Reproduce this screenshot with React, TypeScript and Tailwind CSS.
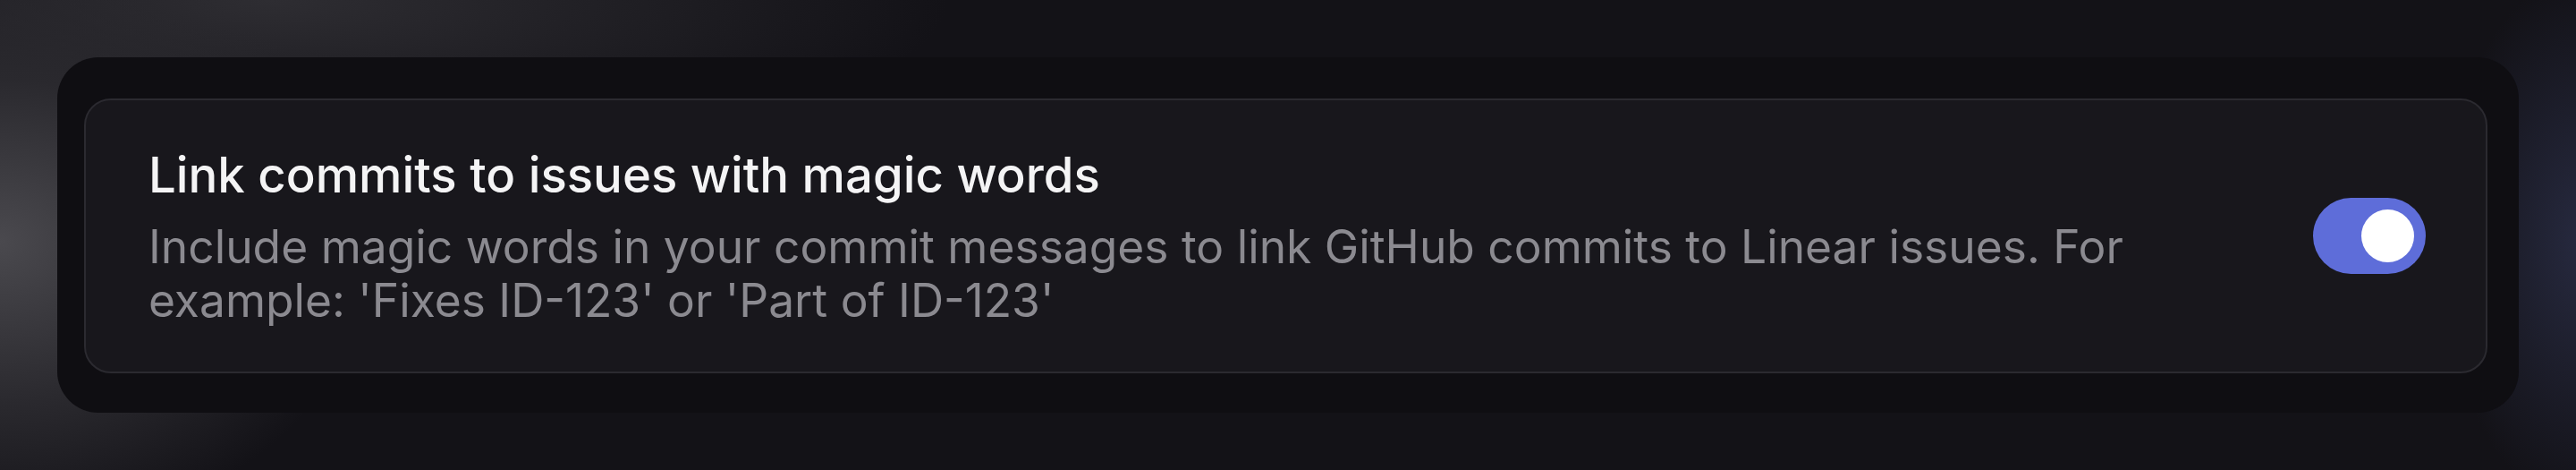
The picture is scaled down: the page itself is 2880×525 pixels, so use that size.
import { useState } from 'react'

function Toggle({ on, onChange }: { on: boolean; onChange: (v: boolean) => void }) {
  return (
    <button
      onClick={() => onChange(!on)}
      className={`flex h-[85px] w-[126px] shrink-0 items-center rounded-full px-[13px] ${on ? 'justify-end bg-[#5e6dd9]' : 'justify-start bg-[#3a3940]'}`}
    >
      <span className="block h-[59px] w-[59px] rounded-full bg-white" />
    </button>
  )
}

export default function App() {
  const [enabled, setEnabled] = useState(true)

  return (
    <div
      className="h-[525px] w-full bg-[#131217] bg-[radial-gradient(ellipse_420px_330px_at_0px_270px,#4a494e_0%,#2a292e_55%,transparent_100%),radial-gradient(ellipse_760px_190px_at_300px_0px,#2e2d32_0%,transparent_100%),radial-gradient(ellipse_160px_300px_at_2890px_270px,#272a40_0%,transparent_100%)] px-[64px] pt-[64px] font-['Inter','Noto_Sans',sans-serif]"
    >
      <div className="rounded-[46px] bg-[#0f0e12] pb-[44px] pl-[30px] pr-[35px] pt-[46px]">
        <div className="flex h-[307px] items-center justify-between gap-16 rounded-[30px] border-2 border-[#2b2a30] bg-[#18171c] pl-[70px] pr-[67px]">
          <div className="max-w-[2290px] flex-1">
            <h2 className="text-[54.5px] font-medium leading-[66px] text-[#f4f4f5]">Link commits to issues with magic words</h2>
            <p className="mt-[17px] text-[51.5px] leading-[60px] text-[#8b8a90]">
              Include magic words in your commit messages to link GitHub commits to Linear issues. For example: 'Fixes ID-123' or 'Part of ID-123'
            </p>
          </div>
          <Toggle on={enabled} onChange={setEnabled} />
        </div>
      </div>
    </div>
  )
}
